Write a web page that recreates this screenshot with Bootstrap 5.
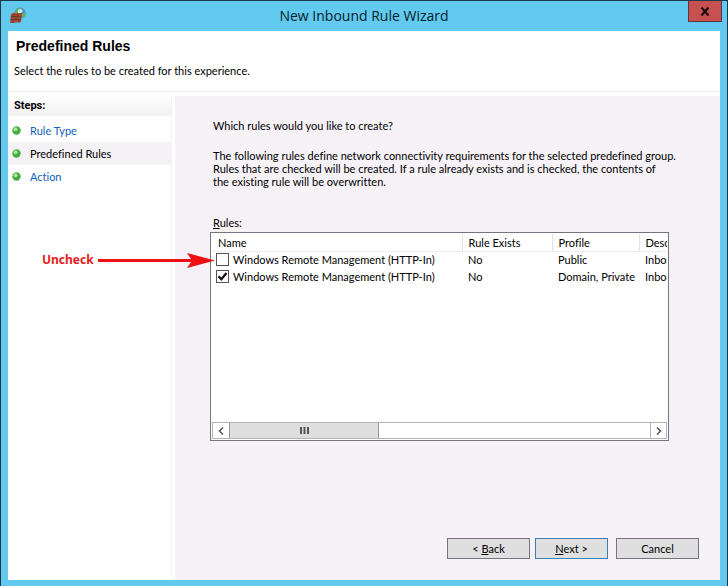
<!DOCTYPE html>
<html lang="en">
<head>
<meta charset="utf-8">
<meta name="viewport" content="width=device-width, initial-scale=1">
<title>New Inbound Rule Wizard</title>
<link href="https://cdn.jsdelivr.net/npm/bootstrap@5.3.0/dist/css/bootstrap.min.css" rel="stylesheet">
<style>
  body { font-family: Lato, "Liberation Sans", sans-serif; font-size: 11px; line-height: 13px; font-variant-ligatures: none; color: #000; background: #62caee; }
  .wizard { padding: 0 7px 6px; border: 1px solid #17394a; border-bottom: 0; background: #62caee; }
  .titlebar { height: 30px; }
  .titlebar h1 { font: 14px/30px "Open Sans", sans-serif; color: #06202c; }
  .app-icon { top: 6px; left: 2px; }
  .close-btn { top: 0; right: -2px; width: 34px; height: 21px; background: #c75050; border: 1px solid #5d3440; border-top: 0; }
  .intro { height: 61px; padding: 7px 6px 0; border-bottom: 1px solid #f1f0f1; }
  .intro h2 { font: bold 14px/16px "Liberation Sans", sans-serif; margin: 0 2px 10px; }
  .steps { width: 164px; margin-right: 3px; border-right: 1px solid #f4f2f4; }
  .steps h3 { font: bold 11px/20px Roboto, sans-serif; padding-left: 6px; background: linear-gradient(#fff, #f3f1f3); margin-bottom: 3px; }
  .steps li { height: 23px; padding-left: 4px; gap: 9px; }
  .steps a { color: #0f62bc; text-decoration: none; }
  .steps li.current { background: #f5f2f6; }
  .steps li.current a { color: #000; }
  .content-pane { background: #f6f2f8; padding: 23px 51px 21px 35px; }
  .prose { padding-left: 3px; margin-right: -10px; }
  .lead-in { margin-bottom: 17px; }
  .rules-label { margin: 28px 0 3px 3px; }
  .rules-box { height: 209px; border: 1px solid #777480; background: #fff; padding: 1px; }
  .rules-table { table-layout: fixed; width: 540px; }
  .rules-table th { height: 17px; font-weight: 400; padding: 0 6px; border-right: 1px solid #e4e2e4; border-bottom: 1px solid #eeecee; }
  .rules-table td { height: 17px; padding: 0 6px; white-space: nowrap; }
  .rules-table td:first-child { padding-left: 4px; }
  .col-name { width: 250px; } .col-exists { width: 90px; } .col-profile { width: 87px; }
  .tick { appearance: none; flex: none; width: 13px; height: 13px; margin: 0; border: 1px solid #555; border-radius: 0; background: #fff center/11px 11px no-repeat; }
  .tick:checked { background-image: url("data:image/svg+xml,%3Csvg xmlns='http://www.w3.org/2000/svg' viewBox='0 0 11 11'%3E%3Cpath d='M1.5 5.3 4.3 8.3 9.5 2' fill='none' stroke='%23151515' stroke-width='2.2'/%3E%3C/svg%3E"); }
  .scroll-strip { height: 17px; border: 1px solid #b5b3b8; }
  .scroll-strip button { width: 16px; padding: 0; border: 0; background: #fff; line-height: 0; }
  .scroll-strip .to-right { border-left: 1px solid #b5b3b8; }
  .thumb { width: 150px; background: #dedede; border: 0 solid #98969b; border-width: 0 1px; }
  .actions { margin-right: -30px; }
  .wiz-btn { width: 83px; height: 21px; padding: 0; border: 1px solid #77737d; background: #dfdfdf; color: #000; }
  .wiz-next { width: 73px; margin: 0 8px 0 5px; border-color: #3c7fb1; }
  .callout-note { left: 34px; top: 160px; gap: 4px; font: bold 12px/16px "Noto Sans", sans-serif; color: #e8191c; pointer-events: none; }
</style>
<script src="https://cdn.jsdelivr.net/npm/bootstrap@5.3.0/dist/js/bootstrap.bundle.min.js"></script>
</head>
<body>
<div class="wizard min-vh-100 d-flex flex-column">
  <header class="titlebar position-relative text-center">
    <svg class="app-icon position-absolute" width="16" height="17" viewBox="0 0 16 17" aria-hidden="true">
      <circle cx="10" cy="6.200" r="5.300" fill="#3e91cc" stroke="#5f8fb8"/>
      <path d="M5 5Q7 1 10 1l1 2-2 3-3 1ZM12 7l3-2v3l-3 3Z" fill="#63b84e"/>
      <path d="M8 3l3-1 2 2-3 3-2-1Z" fill="#c8f0f8"/>
      <path d="M1 7l2-1h9l-1 9-9 1H0Z" fill="#a84832"/>
      <path d="M1 9.500h10M1 12.500h10M4 7v3M8 7v3M6 10v3M3 13v3M9 13v3" stroke="#54382e" stroke-width=".8"/>
    </svg>
    <h1 class="m-0">New Inbound Rule Wizard</h1>
    <button type="button" class="close-btn position-absolute d-flex align-items-center justify-content-center p-0" aria-label="Close">
      <svg width="10" height="9" viewBox="0 0 10 9" aria-hidden="true"><path d="M1.500.5l7 8M8.500.5l-7 8" stroke="#1c0b0d" stroke-width="2.200"/></svg>
    </button>
  </header>
  <div class="intro bg-white">
    <h2>Predefined Rules</h2>
    <p class="m-0">Select the rules to be created for this experience.</p>
  </div>
  <div class="flex-grow-1 d-flex bg-white position-relative pt-1">
    <nav class="steps flex-shrink-0" aria-label="Steps">
      <h3>Steps:</h3>
      <ul class="list-unstyled m-0">
        <li class="d-flex align-items-center"><svg width="9" height="9" aria-hidden="true"><circle cx="4.500" cy="4.500" r="4.200" fill="#45ad40"/><circle cx="3.500" cy="3.300" r="2" fill="#a5e795"/></svg><a href="#">Rule Type</a></li>
        <li class="d-flex align-items-center current"><svg width="9" height="9" aria-hidden="true"><circle cx="4.500" cy="4.500" r="4.200" fill="#45ad40"/><circle cx="3.500" cy="3.300" r="2" fill="#a5e795"/></svg><a href="#" aria-current="step">Predefined Rules</a></li>
        <li class="d-flex align-items-center"><svg width="9" height="9" aria-hidden="true"><circle cx="4.500" cy="4.500" r="4.200" fill="#45ad40"/><circle cx="3.500" cy="3.300" r="2" fill="#a5e795"/></svg><a href="#">Action</a></li>
      </ul>
    </nav>
    <main class="content-pane flex-grow-1 d-flex flex-column overflow-hidden">
      <p class="prose lead-in">Which rules would you like to create?</p>
      <p class="prose mb-0">The following rules define network connectivity requirements for the selected predefined group. Rules that are checked will be created. If a rule already exists and is checked, the contents of the&nbsp;existing rule will be overwritten.</p>
      <div class="rules-label" id="rules-label"><u>R</u>ules:</div>
      <div class="rules-box d-flex flex-column">
        <div class="flex-grow-1 overflow-hidden">
          <table class="rules-table" aria-labelledby="rules-label">
            <colgroup><col class="col-name"><col class="col-exists"><col class="col-profile"><col></colgroup>
            <thead><tr><th>Name</th><th>Rule Exists</th><th>Profile</th><th>Description</th></tr></thead>
            <tbody>
              <tr><td><div class="d-flex align-items-center gap-1"><input class="tick" type="checkbox" id="rule-1"><label for="rule-1">Windows Remote Management (HTTP-In)</label></div></td><td>No</td><td>Public</td><td>Inbound</td></tr>
              <tr><td><div class="d-flex align-items-center gap-1"><input class="tick" type="checkbox" id="rule-2" checked><label for="rule-2">Windows Remote Management (HTTP-In)</label></div></td><td>No</td><td>Domain, Private</td><td>Inbound</td></tr>
            </tbody>
          </table>
        </div>
        <div class="scroll-strip d-flex">
          <button type="button" aria-label="Scroll left"><svg width="6" height="8" viewBox="0 0 6 8"><path d="M5 .5 1.500 4 5 7.500" fill="none" stroke="#555" stroke-width="1.500"/></svg></button>
          <div class="thumb d-flex align-items-center justify-content-center"><svg width="9" height="7" aria-hidden="true"><path d="M1 0v7M4.500 0v7M8 0v7" stroke="#555" stroke-width="2"/></svg></div>
          <button type="button" class="to-right ms-auto" aria-label="Scroll right"><svg width="6" height="8" viewBox="0 0 6 8"><path d="M1 .5 4.500 4 1 7.500" fill="none" stroke="#555" stroke-width="1.500"/></svg></button>
        </div>
      </div>
      <div class="actions d-flex justify-content-end mt-auto">
        <button type="button" class="wiz-btn">&lt; <u>B</u>ack</button>
        <button type="button" class="wiz-btn wiz-next"><u>N</u>ext &gt;</button>
        <button type="button" class="wiz-btn">Cancel</button>
      </div>
    </main>
    <div class="callout-note position-absolute d-flex align-items-center">
      <span>Uncheck</span>
      <svg width="117" height="15" viewBox="0 0 117 15" aria-hidden="true"><path d="M0 6H93L89 0 117 7.500 89 15 93 9H0Z" fill="#f01014"/></svg>
    </div>
  </div>
</div>
</body>
</html>
